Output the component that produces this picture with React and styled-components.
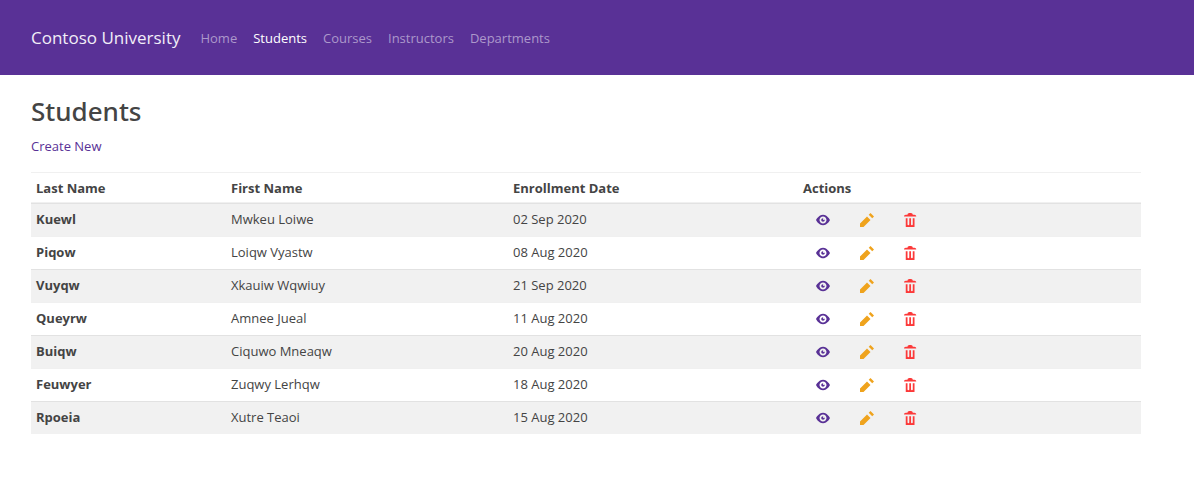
import React from 'react';
import styled, { createGlobalStyle } from 'styled-components';

const GlobalStyle = createGlobalStyle`
  *, *::before, *::after { box-sizing: border-box; }
  body {
    margin: 0;
    background: #fff;
    color: #444;
    font-family: "Open Sans", "Noto Sans", sans-serif;
    font-size: 13px;
    line-height: 22px;
  }
`;

const Navbar = styled.header`
  background: #593196;
  padding: 16px;
`;

const NavContainer = styled.div`
  max-width: 1140px;
  min-height: 43px;
  padding: 0 15px;
  display: flex;
  align-items: center;
`;

const Brand = styled.a`
  margin-right: 12px;
  font-size: 17px;
  line-height: 28px;
  color: #f2eef8;
  text-decoration: none;
  white-space: nowrap;
`;

const NavList = styled.ul`
  display: flex;
  list-style: none;
  margin: 0;
  padding: 0;
`;

const NavLink = styled.a`
  display: block;
  padding: 8px;
  color: ${(p) => (p.$active ? '#fff' : '#ac98cb')};
  text-decoration: none;
`;

const Main = styled.main`
  max-width: 1172px;
  padding: 20px 31px 45px;
`;

const Title = styled.h1`
  margin: 0 0 8px;
  font-family: "Noto Sans", "Open Sans", sans-serif;
  font-size: 26px;
  line-height: 32px;
  font-weight: 500;
`;

const CreateLink = styled.a`
  display: block;
  width: max-content;
  margin-bottom: 15px;
  color: #593196;
  text-decoration: none;
`;

const Table = styled.table`
  width: 100%;
  table-layout: fixed;
  border-spacing: 0;
  text-align: left;
`;

const HeadCell = styled.th`
  width: ${(p) => p.$width || 'auto'};
  height: 31px;
  padding: 4px 5px 3px;
  border: solid rgba(0, 0, 0, 0.06);
  border-width: 1px 0;
  font-weight: 700;
`;

const Row = styled.tr`
  &:nth-child(odd) { background: #f1f1f1; }
`;

const Cell = styled.td`
  height: 33px;
  padding: 4px 5px 6px;
  border-top: 1px solid rgba(0, 0, 0, 0.06);
`;

const RowHead = styled(Cell)`
  font-weight: 700;
`;

const Actions = styled.div`
  display: flex;
  gap: 4px;
`;

const IconButton = styled.button`
  display: flex;
  align-items: center;
  height: 22px;
  padding: 2px 13px 0;
  border: 0;
  background: none;
  color: ${(p) => p.$color};
  cursor: pointer;
`;

const Icon = ({ d }) => (
  <svg width="14" height="14" viewBox="0 0 8 8" fill="currentColor" aria-hidden="true">
    <path d={d} />
  </svg>
);

const links = ['Home', 'Students', 'Courses', 'Instructors', 'Departments'];

const columns = [
  ['Last Name', '195px'],
  ['First Name', '282px'],
  ['Enrollment Date', '290px'],
  ['Actions'],
];

const students = [
  ['Kuewl', 'Mwkeu Loiwe', '02 Sep 2020'],
  ['Piqow', 'Loiqw Vyastw', '08 Aug 2020'],
  ['Vuyqw', 'Xkauiw Wqwiuy', '21 Sep 2020'],
  ['Queyrw', 'Amnee Jueal', '11 Aug 2020'],
  ['Buiqw', 'Ciquwo Mneaqw', '20 Aug 2020'],
  ['Feuwyer', 'Zuqwy Lerhqw', '18 Aug 2020'],
  ['Rpoeia', 'Xutre Teaoi', '15 Aug 2020'],
];

const actions = [
  {
    label: 'Details',
    color: '#593196',
    d: 'M4.03 1c-2.53 0-4.03 3-4.03 3s1.5 3 4.03 3c2.47 0 3.97-3 3.97-3s-1.5-3-3.97-3zm-.03 1c1.11 0 2 .9 2 2 0 1.11-.89 2-2 2-1.1 0-2-.89-2-2 0-1.1.9-2 2-2zm0 1c-.55 0-1 .45-1 1s.45 1 1 1 1-.45 1-1c0-.1-.04-.19-.06-.28-.08.16-.24.28-.44.28-.28 0-.5-.22-.5-.5 0-.2.12-.36.28-.44-.09-.03-.18-.06-.28-.06z',
  },
  {
    label: 'Edit',
    color: '#efa31d',
    d: 'M6 0l-1 1 2 2 1-1-2-2zm-2 2l-4 4v2h2l4-4-2-2z',
  },
  {
    label: 'Delete',
    color: '#fc3939',
    d: 'M3 0c-.55 0-1 .45-1 1h-1c-.55 0-1 .45-1 1h7c0-.55-.45-1-1-1h-1c0-.55-.45-1-1-1h-1zm-2 3v4.81c0 .11.08.19.19.19h4.63c.11 0 .19-.08.19-.19v-4.81h-1v3.5c0 .28-.22.5-.5.5s-.5-.22-.5-.5v-3.5h-1v3.5c0 .28-.22.5-.5.5s-.5-.22-.5-.5v-3.5h-1z',
  },
];

export default function App() {
  return (
    <>
      <GlobalStyle />
      <Navbar>
        <NavContainer as="nav">
          <Brand href="#">Contoso University</Brand>
          <NavList>
            {links.map((l) => (
              <li key={l}>
                <NavLink href="#" $active={l === 'Students'}>{l}</NavLink>
              </li>
            ))}
          </NavList>
        </NavContainer>
      </Navbar>
      <Main>
        <Title>Students</Title>
        <CreateLink href="#">Create New</CreateLink>
        <Table>
          <thead>
            <tr>
              {columns.map(([name, width]) => (
                <HeadCell key={name} scope="col" $width={width}>{name}</HeadCell>
              ))}
            </tr>
          </thead>
          <tbody>
            {students.map(([last, first, date]) => (
              <Row key={last}>
                <RowHead as="th" scope="row">{last}</RowHead>
                <Cell>{first}</Cell>
                <Cell>{date}</Cell>
                <Cell>
                  <Actions>
                    {actions.map((a) => (
                      <IconButton key={a.label} type="button" aria-label={`${a.label} ${last}`} $color={a.color}>
                        <Icon d={a.d} />
                      </IconButton>
                    ))}
                  </Actions>
                </Cell>
              </Row>
            ))}
          </tbody>
        </Table>
      </Main>
    </>
  );
}
